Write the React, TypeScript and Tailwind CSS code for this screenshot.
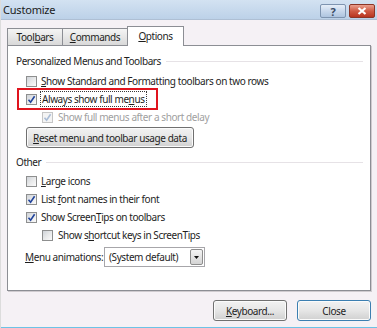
import React from "react";

function Check({ checked, disabled }: { checked?: boolean; disabled?: boolean }) {
  return (
    <span
      className={
        disabled
          ? "relative flex h-[11px] w-[11px] shrink-0 items-center justify-center border border-[#c6c6c6] bg-[#f4f4f4]"
          : "relative flex h-[11px] w-[11px] shrink-0 items-center justify-center border border-[#8e8f8f] bg-gradient-to-br from-[#cfd3d8] via-[#e8e9ea] to-[#fbfbfb]"
      }
    >
      {checked && (
        <svg width="9" height="9" viewBox="0 0 9 9" className="absolute">
          <path
            d="M1.5 4.8 L3.6 7.2 L7.6 1.2"
            fill="none"
            stroke={disabled ? "#a9bcd6" : "#21449c"}
            strokeWidth="1.6"
          />
        </svg>
      )}
    </span>
  );
}

function U({ children }: { children: React.ReactNode }) {
  return <span className="underline underline-offset-[1px]">{children}</span>;
}

function Header({ children }: { children: React.ReactNode }) {
  return (
    <div className="flex h-[14px] items-center pl-[8px] pr-[7px]">
      <span className="text-[#1e1e1e]">{children}</span>
      <span className="ml-[5px] h-px flex-1 bg-[#e6e2e6]" />
    </div>
  );
}

function Btn({ children, def, w }: { children: React.ReactNode; def?: boolean; w: string }) {
  return (
    <div
      className={
        (def ? "border-[#3c7fb1] " : "border-[#707070] ") +
        w +
        " flex h-[21px] items-center justify-center rounded-[3px] border bg-gradient-to-b from-[#f2f2f2] via-[#e6e6e6] to-[#d0d0d0] text-[#1e1e1e] shadow-[inset_0_0_0_1px_#fbfbfb]"
      }
    >
      {children}
    </div>
  );
}

export default function App() {
  return (
    <div className="flex h-[328px] w-[377px] flex-col overflow-hidden whitespace-nowrap border-l border-[#dcdcdc] bg-[#f5f1f5] font-['Noto_Sans',sans-serif] text-[10px] leading-none tracking-[-0.42px] text-[#1e1e1e]">
      {/* Title bar */}
      <div className="flex h-[20px] shrink-0 items-start border-b border-[#aebfd4] bg-gradient-to-b from-[#d3e2f2] to-[#bcd1e8]">
        <span className="ml-[2px] mt-[4px] text-[11px] tracking-[-0.2px] text-[#1b1b1b]">Customize</span>
        <div className="ml-auto mr-[2px] mt-[4px] flex gap-[3px]">
          <div className="flex h-[14px] w-[26px] items-center justify-center rounded-[2px] border border-[#7e94b0] bg-gradient-to-b from-[#e6eef8] via-[#c8d8ec] to-[#aec4df] text-[11px] font-bold tracking-normal text-[#3a4c66]">
            ?
          </div>
          <div className="flex h-[14px] w-[26px] items-center justify-center rounded-[2px] border border-[#8c3526] bg-gradient-to-b from-[#e9a08f] via-[#cf5a44] to-[#b8341f]">
            <svg width="10" height="8" viewBox="0 0 10 8">
              <path d="M1.5 1 L8.5 7 M8.5 1 L1.5 7" stroke="#ffffff" strokeWidth="2.2" />
            </svg>
          </div>
        </div>
      </div>

      {/* Tabs */}
      <div className="mt-[6px] flex h-[19px] items-end pl-[6px]">
        <div className="flex h-[17px] w-[56px] items-center justify-center border border-b-0 border-[#8c8e94] bg-gradient-to-b from-[#f4f4f4] to-[#d9d9d9]">
          Tool<U>b</U>ars
        </div>
        <div className="-ml-px flex h-[17px] w-[66px] items-center justify-center border border-b-0 border-[#8c8e94] bg-gradient-to-b from-[#f4f4f4] to-[#d9d9d9]">
          <U>C</U>ommands
        </div>
        <div className="relative z-10 -mb-px -ml-px flex h-[20px] w-[57px] items-center justify-center border border-b-0 border-[#8c8e94] bg-white pb-[2px]">
          <U>O</U>ptions
        </div>
      </div>

      {/* Panel */}
      <div className="ml-[6px] flex h-[246px] w-[364px] flex-col border border-[#8c8e94] bg-white pt-[8px] shadow-[1px_1px_0_#cfcbcf]">
        <Header>Personalized Menus and Toolbars</Header>
        <div className="mt-[4px] flex h-[18px] items-center gap-[4px] pl-[18px]">
          <Check />
          <span>
            <U>S</U>how Standard and Formatting toolbars on two rows
          </span>
        </div>
        <div className="relative flex h-[18px] items-center gap-[3px] pl-[18px]">
          <Check checked />
          <span className="border border-dotted border-[#3a3a3a] px-px py-[2px]">
            Always show full me<U>n</U>us
          </span>
          <div className="pointer-events-none absolute left-[9px] top-[-2px] h-[22px] w-[141px] border-2 border-[#e0141e]" />
        </div>
        <div className="flex h-[18px] items-center gap-[5px] pl-[34px] text-[#a0a0a0]">
          <Check checked disabled />
          <span>Show full menus after a short delay</span>
        </div>
        <div className="ml-[18px] mt-[1px]">
          <Btn w="w-[168px]">
            <span>
              <U>R</U>eset menu and toolbar usage data
            </span>
          </Btn>
        </div>

        <div className="mt-[7px]">
          <Header>Other</Header>
        </div>
        <div className="mt-[3px] flex h-[18px] items-center gap-[4px] pl-[18px]">
          <Check />
          <span>
            <U>L</U>arge icons
          </span>
        </div>
        <div className="flex h-[18px] items-center gap-[4px] pl-[18px]">
          <Check checked />
          <span>
            List <U>f</U>ont names in their font
          </span>
        </div>
        <div className="flex h-[18px] items-center gap-[4px] pl-[18px]">
          <Check checked />
          <span>
            Show Screen<U>T</U>ips on toolbars
          </span>
        </div>
        <div className="flex h-[18px] items-center gap-[5px] pl-[34px]">
          <Check />
          <span>
            Show s<U>h</U>ortcut keys in ScreenTips
          </span>
        </div>
        <div className="mt-[3px] flex h-[20px] items-center pl-[17px]">
          <span className="w-[79px]">
            <U>M</U>enu animations:
          </span>
          <div className="flex h-[20px] w-[101px] items-center border border-[#a7a6aa] bg-white pl-[4px]">
            <span className="flex-1">(System default)</span>
            <div className="mr-px flex h-[16px] w-[13px] items-center justify-center rounded-[2px] border border-[#8d8d8d] bg-gradient-to-b from-[#f4f4f4] to-[#d4d4d4]">
              <svg width="5" height="3" viewBox="0 0 5 3">
                <path d="M0 0 L5 0 L2.5 3 Z" fill="#111" />
              </svg>
            </div>
          </div>
        </div>
      </div>

      {/* Buttons */}
      <div className="mt-[9px] flex justify-end gap-[10px] pr-[6px]">
        <Btn w="w-[74px]">
          <span>
            <U>K</U>eyboard...
          </span>
        </Btn>
        <Btn w="w-[74px]" def>
          <span>Close</span>
        </Btn>
      </div>
      <div className="mt-auto h-px w-full bg-[#6cc3e6]" />
    </div>
  );
}
